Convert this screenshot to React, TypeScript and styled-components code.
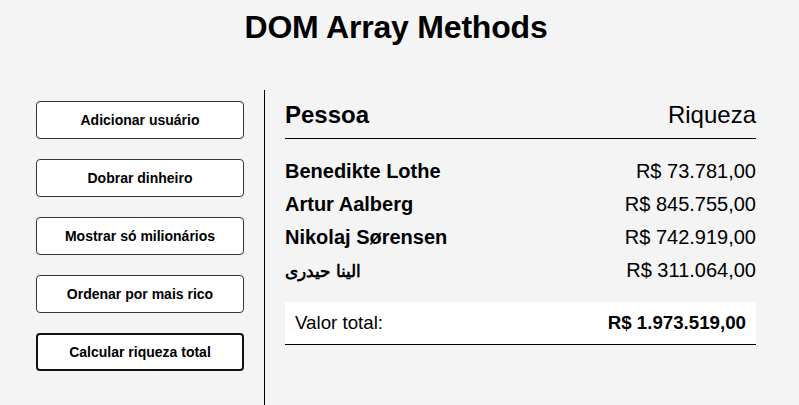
import React from "react";
import styled, { createGlobalStyle } from "styled-components";

const GlobalStyle = createGlobalStyle`
  html, body {
    margin: 0;
    padding: 0;
    background: #f4f4f4;
    font-family: "Liberation Sans", Arial, sans-serif;
    color: #000;
    overflow: hidden;
  }
  * { box-sizing: border-box; }
`;

const Page = styled.div`
  width: 727px;
  margin: 0 auto;
  padding-right: 7px;
`;

const Title = styled.h1`
  margin: 9px 0 0;
  font-size: 32px;
  font-weight: bold;
  line-height: normal;
  text-align: center;
  letter-spacing: -0.2px;
`;

const Layout = styled.div`
  display: flex;
  margin-top: 44px;
  height: 330px;
`;

const Aside = styled.aside`
  width: 229px;
  padding: 11px 21px 0 0;
  border-right: 1px solid #000;
  display: flex;
  flex-direction: column;
  gap: 20px;
`;

const Button = styled.button<{ $active?: boolean }>`
  height: 38px;
  width: 208px;
  background: #fff;
  border: ${(p) => (p.$active ? "2px solid #111" : "1px solid #333")};
  border-radius: 4px;
  font-family: "Liberation Sans", Arial, sans-serif;
  font-size: 14px;
  font-weight: bold;
  color: #000;
  cursor: pointer;
  padding: 0;
`;

const Main = styled.main`
  flex: 1;
  padding: 11px 0 0 20px;
`;

const Header = styled.div`
  display: flex;
  justify-content: space-between;
  font-size: 24px;
  line-height: 28px;
  padding-bottom: 9px;
  border-bottom: 1px solid #000;
`;

const HeadCell = styled.span<{ $bold?: boolean }>`
  font-weight: ${(p) => (p.$bold ? "bold" : "normal")};
`;

const List = styled.div`
  display: flex;
  flex-direction: column;
  gap: 10px;
  margin-top: 21px;
`;

const Row = styled.div`
  display: flex;
  justify-content: space-between;
  align-items: baseline;
  font-size: 20px;
  line-height: 23px;
`;

const Name = styled.strong<{ $rtl?: boolean }>`
  font-weight: bold;
  font-size: ${(p) => (p.$rtl ? "16.5px" : "20px")};
`;

const Total = styled.div`
  display: flex;
  justify-content: space-between;
  margin-top: 19px;
  background: #fff;
  padding: 10px;
  font-size: 18.72px;
  line-height: 21.5px;
  border-bottom: 1px solid #000;
`;

const people = [
  { name: "Benedikte Lothe", money: "R$ 73.781,00" },
  { name: "Artur Aalberg", money: "R$ 845.755,00" },
  { name: "Nikolaj Sørensen", money: "R$ 742.919,00" },
  { name: "الينا حيدری", money: "R$ 311.064,00", rtl: true },
];

const buttons = [
  "Adicionar usuário",
  "Dobrar dinheiro",
  "Mostrar só milionários",
  "Ordenar por mais rico",
  "Calcular riqueza total",
];

export default function App() {
  return (
    <>
      <GlobalStyle />
      <Page>
        <Title>DOM Array Methods</Title>
        <Layout>
          <Aside>
            {buttons.map((b, i) => (
              <Button key={b} $active={i === buttons.length - 1}>
                {b}
              </Button>
            ))}
          </Aside>
          <Main>
            <Header>
              <HeadCell $bold>Pessoa</HeadCell>
              <HeadCell>Riqueza</HeadCell>
            </Header>
            <List>
              {people.map((p) => (
                <Row key={p.name}>
                  <Name $rtl={p.rtl}>{p.name}</Name>
                  <span>{p.money}</span>
                </Row>
              ))}
            </List>
            <Total>
              <span>Valor total:</span>
              <strong>R$ 1.973.519,00</strong>
            </Total>
          </Main>
        </Layout>
      </Page>
    </>
  );
}
